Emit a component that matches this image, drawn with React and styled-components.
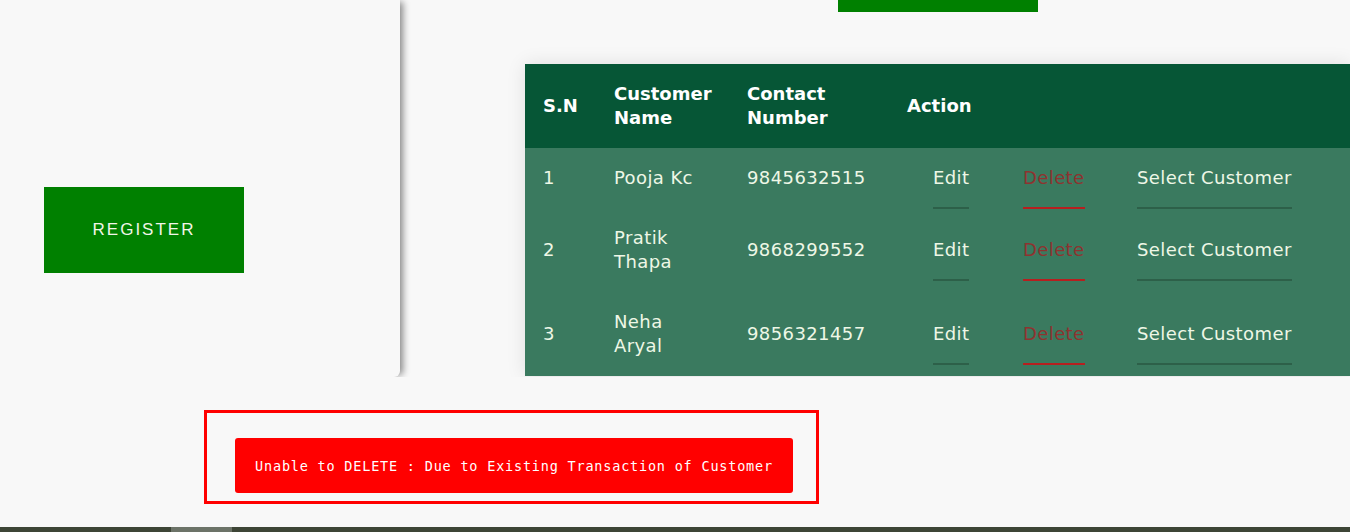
import React from "react";
import styled, { createGlobalStyle } from "styled-components";

const GlobalStyle = createGlobalStyle`
  html, body {
    margin: 0;
    padding: 0;
    background: #f8f8f8;
    overflow: hidden;
  }
  body {
    font-family: "DejaVu Sans", sans-serif;
  }
`;

const Page = styled.div`
  width: 1350px;
  height: 532px;
  display: flex;
  flex-direction: column;
  background: #f8f8f8;
`;

const Top = styled.div`
  display: flex;
  height: 377px;
  overflow: hidden;
  flex-shrink: 0;
`;

const SidePanel = styled.div`
  width: 400px;
  flex-shrink: 0;
  background: #f8f8f8;
  border-bottom-right-radius: 6px;
  box-shadow: 5px 0 7px -2px rgba(0, 0, 0, 0.45);
  padding: 187px 0 0 44px;
  box-sizing: border-box;
  position: relative;
  z-index: 1;
`;

const GreenButton = styled.button`
  width: 200px;
  height: ${(p) => p.$height || 86}px;
  background: #008000;
  border: none;
  color: #f2f5e8;
  font-family: "Liberation Sans", Arial, sans-serif;
  font-size: 17px;
  letter-spacing: 2px;
  padding: 0;
  display: block;
  overflow: hidden;
`;

const Main = styled.div`
  flex: 1;
  min-width: 0;
  display: flex;
  flex-direction: column;
`;

const TopBar = styled.div`
  padding-left: 438px;
`;

const TableWrap = styled.div`
  margin: 52px 0 0 125px;
  box-shadow: 0 0 18px rgba(0, 0, 0, 0.1);
`;

const Table = styled.table`
  border-collapse: collapse;
  table-layout: fixed;
  width: 860px;
  font-size: 18px;
  line-height: 24px;
`;

const HeadRow = styled.tr`
  background: #065636;
`;

const Th = styled.th`
  text-align: left;
  color: #ffffff;
  font-weight: bold;
  padding: 18px 18px;
  vertical-align: middle;
`;

const Row = styled.tr`
  background: #3a7a5f;
`;

const Td = styled.td`
  color: #eef7e6;
  font-weight: normal;
  letter-spacing: 0.4px;
  padding: 18px 18px 18px ${(p) => p.$pl || 18}px;
  vertical-align: middle;
`;

const ActionLink = styled.a`
  color: ${(p) => (p.$danger ? "#8e3330" : "#eef7e6")};
  padding: 19px 0;
  border-bottom: 2px solid ${(p) => (p.$danger ? "#b71f1f" : "#2d6049")};
  text-decoration: none;
  cursor: pointer;
`;

const AlertFrame = styled.div`
  margin: 33px 0 0 204px;
  width: 615px;
  height: 94px;
  box-sizing: border-box;
  border: 3px solid #ff0000;
  padding: 25px 0 0 28px;
`;

const AlertBox = styled.div`
  width: 558px;
  height: 55px;
  background: #ff0000;
  border-radius: 3px;
  color: #ffffff;
  font-family: "DejaVu Sans Mono", "Liberation Mono", monospace;
  font-size: 13.5px;
  letter-spacing: 0.8px;
  display: flex;
  align-items: center;
  justify-content: center;
`;

const ScrollTrack = styled.div`
  margin-top: auto;
  height: 5px;
  background: #3d4536;
  padding-left: 171px;
`;

const ScrollThumb = styled.div`
  width: 61px;
  height: 100%;
  background: #6c7368;
`;

const customers = [
  { id: 1, name: "Pooja Kc", phone: "9845632515" },
  { id: 2, name: "Pratik Thapa", phone: "9868299552" },
  { id: 3, name: "Neha Aryal", phone: "9856321457" },
];

const App = () => {
  return (
    <Page>
      <GlobalStyle />
      <Top>
        <SidePanel>
          <GreenButton>REGISTER</GreenButton>
        </SidePanel>
        <Main>
          <TopBar>
            <GreenButton $height={12} />
          </TopBar>
          <TableWrap>
            <Table>
              <colgroup>
                <col style={{ width: 71 }} />
                <col style={{ width: 133 }} />
                <col style={{ width: 160 }} />
                <col style={{ width: 116 }} />
                <col style={{ width: 114 }} />
                <col style={{ width: 266 }} />
              </colgroup>
              <thead>
                <HeadRow>
                  <Th>S.N</Th>
                  <Th>Customer Name</Th>
                  <Th>Contact Number</Th>
                  <Th colSpan={3}>Action</Th>
                </HeadRow>
              </thead>
              <tbody>
                {customers.map((c) => (
                  <Row key={c.id}>
                    <Td>{c.id}</Td>
                    <Td>{c.name}</Td>
                    <Td>{c.phone}</Td>
                    <Td $pl={44}>
                      <ActionLink>Edit</ActionLink>
                    </Td>
                    <Td>
                      <ActionLink $danger>Delete</ActionLink>
                    </Td>
                    <Td>
                      <ActionLink>Select Customer</ActionLink>
                    </Td>
                  </Row>
                ))}
              </tbody>
            </Table>
          </TableWrap>
        </Main>
      </Top>
      <AlertFrame>
        <AlertBox>Unable to DELETE : Due to Existing Transaction of Customer</AlertBox>
      </AlertFrame>
      <ScrollTrack>
        <ScrollThumb />
      </ScrollTrack>
    </Page>
  );
};

export default App;
